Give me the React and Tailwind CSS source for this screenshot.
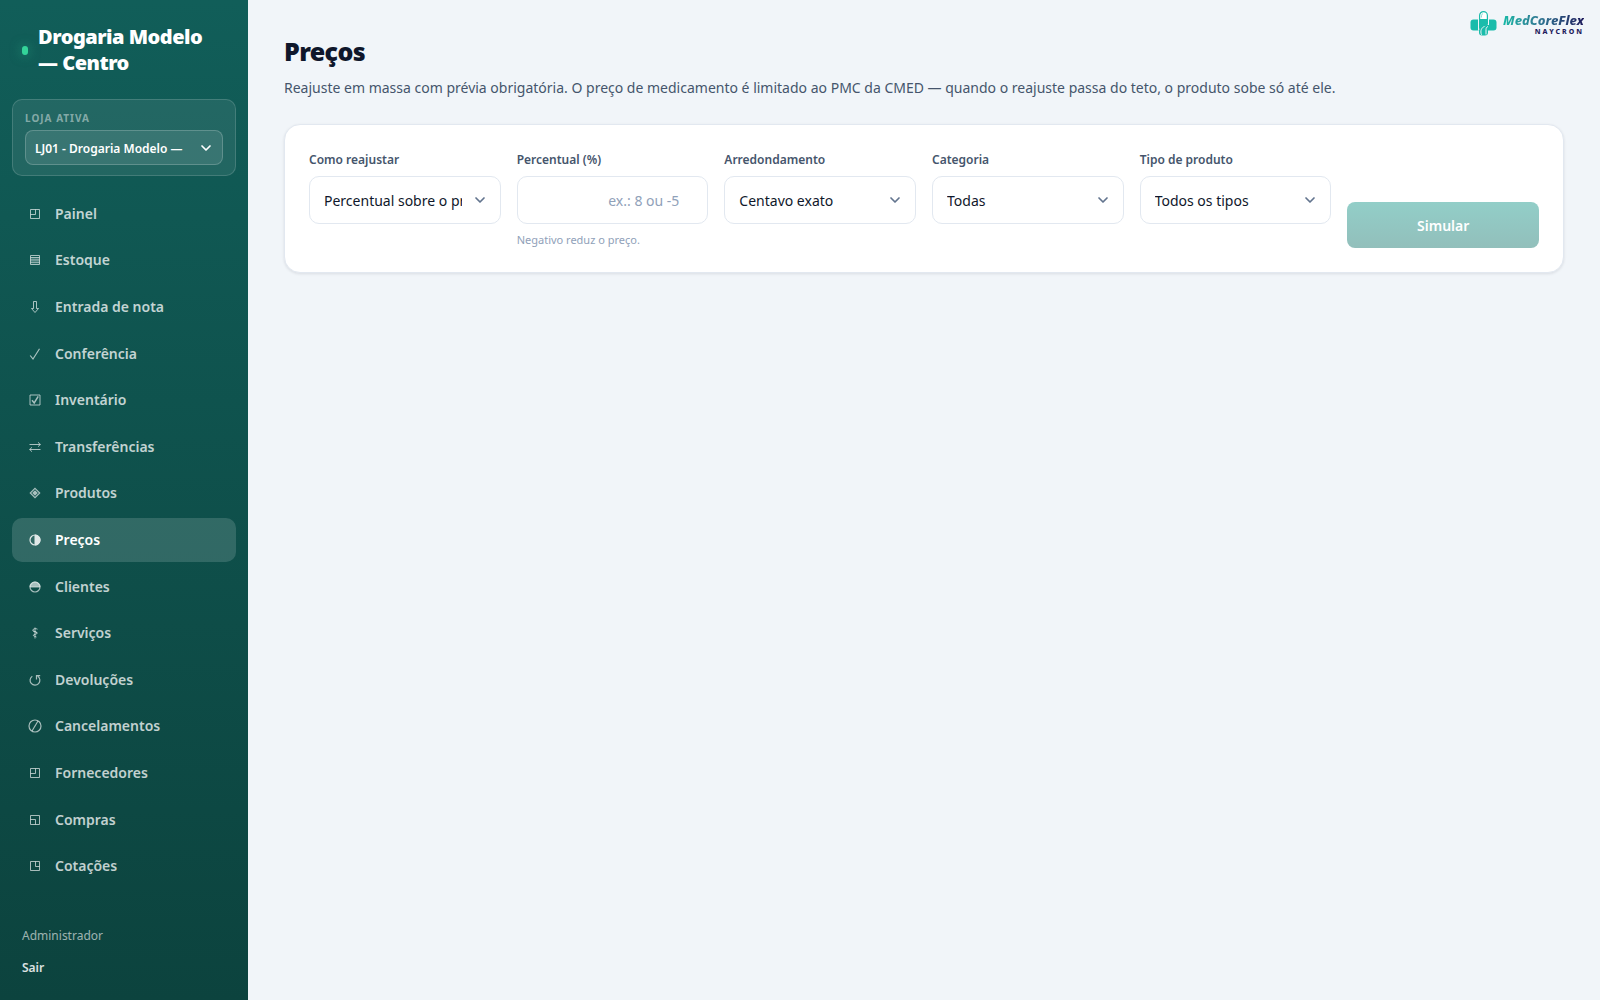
import { useId, useState } from 'react';

const NAV = [
  { label: 'Painel', icon: 'topLeft' },
  { label: 'Estoque', icon: 'lines' },
  { label: 'Entrada de nota', icon: 'arrowDown' },
  { label: 'Conferência', icon: 'check' },
  { label: 'Inventário', icon: 'checkbox' },
  { label: 'Transferências', icon: 'swap' },
  { label: 'Produtos', icon: 'diamond' },
  { label: 'Preços', icon: 'halfRight' },
  { label: 'Clientes', icon: 'halfTop' },
  { label: 'Serviços', icon: 'staff' },
  { label: 'Devoluções', icon: 'undo' },
  { label: 'Cancelamentos', icon: 'slash' },
  { label: 'Fornecedores', icon: 'topLeft' },
  { label: 'Compras', icon: 'bottomLeft' },
  { label: 'Cotações', icon: 'topRight' },
];

const ICONS = {
  topLeft: <path d="M2.5 2.5h9v9h-9zM7.5 2.5v5h-5" />,
  bottomLeft: <path d="M2.5 2.5h9v9h-9zM7.5 11.5v-5h-5" />,
  topRight: <path d="M2.5 2.5h9v9h-9zM7.5 2.5v5h4" />,
  lines: <path d="M2.5 2.5h9v9h-9zM2.5 4.5h9M2.5 6.2h9M2.5 7.9h9M2.5 9.7h9" />,
  arrowDown: <path d="M5.5 1.5h3v7h2L7 12.5 3.5 8.5h2z" />,
  check: <path d="M2.2 8.5 5 12 11.5 1.8" strokeWidth="1.2" />,
  checkbox: (
    <>
      <path d="M2 2h10v10H2z" />
      <path d="M4 7.2 6.2 10 10.2 3.3" strokeWidth="1.5" />
    </>
  ),
  swap: <path d="M1.500 4.500h11M10 2.300 12.300 4.500 10 6.700M12.500 9.500h-11M4 7.300 1.700 9.500 4 11.700" />,
  diamond: (
    <>
      <path d="M7 2.300 11.700 7 7 11.700 2.300 7z" strokeWidth="1.2" />
      <path d="M7 4.200 9.800 7 7 9.800 4.200 7z" fill="currentColor" stroke="none" />
    </>
  ),
  halfRight: (
    <>
      <circle cx="7" cy="7" r="5" strokeWidth="1.2" />
      <path d="M7 2a5 5 0 0 1 0 10z" fill="currentColor" />
    </>
  ),
  halfTop: (
    <>
      <circle cx="7" cy="7" r="5" strokeWidth="1.2" />
      <path d="M2 7a5 5 0 0 1 10 0z" fill="currentColor" />
    </>
  ),
  staff: (
    <path d="M7 1.5v11M9.5 3.2C8 2.2 4.8 2.6 4.8 4.2S9.2 5.2 9.2 7 5.3 7.8 5.3 9.2s2.7 1 3.2 1.8M4.8 4.8C5.5 6 9 5.7 9 7.2" />
  ),
  undo: <path d="M4.300 3.200A4.900 4.900 0 1 0 9.800 3.300M8.500 6.500V2.600h3.700" strokeWidth="1.2" />,
  slash: (
    <>
      <circle cx="7" cy="7" r="6" strokeWidth="1.2" />
      <path d="M10 2 4 12" strokeWidth="1.2" />
    </>
  ),
};

function NavIcon({ name }) {
  return (
    <svg
      viewBox="0 0 14 14"
      className="h-3.5 w-3.5"
      fill="none"
      stroke="currentColor"
      strokeWidth="1"
      aria-hidden="true"
    >
      {ICONS[name]}
    </svg>
  );
}

function Chevron({ className }) {
  return (
    <svg
      viewBox="0 0 12 12"
      className={`pointer-events-none absolute top-1/2 h-3 w-3 -translate-y-1/2 ${className}`}
      fill="none"
      stroke="currentColor"
      strokeWidth="1.7"
      strokeLinecap="round"
      strokeLinejoin="round"
      aria-hidden="true"
    >
      <path d="M2 4l4 4 4-4" />
    </svg>
  );
}

function Logo() {
  return (
    <div className="absolute top-2.5 right-4 flex items-center gap-1.5">
      <svg viewBox="0 0 28 26" className="h-[26px] w-7" aria-hidden="true">
        {/* cross */}
        <rect x="1.5" y="9.500" width="26" height="11" rx="3" fill="#1abcab" />
        <rect x="10" y="12" width="9" height="13.500" rx="3" fill="#1abcab" />
        {/* capsule */}
        <path d="M9 21V6.500a5.500 5.500 0 0 1 11 0V15H17l-5 3z" fill="#f1f5f9" />
        <rect x="10.600" y="1.600" width="7.800" height="15" rx="3.900" fill="#fff" stroke="#1abcab" strokeWidth="1.200" />
        <path d="M10 9h9v4c0 2-2 3-4 3.500-2 .8-3.300 2-4 4-.7-1-1-2-1-3z" fill="#1abcab" />
        <path d="M12.500 7.500V5.700a2 2 0 0 1 1.500-2" fill="none" stroke="#8ddfd5" strokeWidth="1" />
        <path d="M12.500 24.800c-1.500-4 0-7.300 3-8.300M17 24.500v-5c0-1.500.7-2.500 2-3" fill="none" stroke="#f1f5f9" strokeWidth="1" />
      </svg>
      <div className="flex flex-col items-end">
        <span className="bg-linear-to-r from-[#14b8a6] via-[#2f6f8f] to-[#1e1b5c] bg-clip-text text-[13px] leading-4 font-extrabold text-transparent italic">
          MedCoreFlex
        </span>
        <span className="text-[7px] leading-[7px] font-extrabold tracking-[2px] text-[#1e1b5c]">NAYCRON</span>
      </div>
    </div>
  );
}

function Field({ label, hint, children }) {
  const id = useId();
  return (
    <div>
      <label htmlFor={id} className="block text-xs leading-[22px] font-semibold text-slate-600">
        {label}
      </label>
      <div className="relative mt-[5px]">{children(id)}</div>
      {hint && <p className="mt-2 text-[11px] leading-4 text-slate-400">{hint}</p>}
    </div>
  );
}

function SelectField({ label, options }) {
  return (
    <Field label={label}>
      {(id) => (
        <>
          <select
            id={id}
            className="h-12 w-full appearance-none rounded-[10px] border border-slate-200 bg-white pt-0.5 pr-[38px] pl-3.5 text-sm text-slate-900"
          >
            {options.map((o) => (
              <option key={o}>{o}</option>
            ))}
          </select>
          <Chevron className="right-[15px] text-slate-500" />
        </>
      )}
    </Field>
  );
}

function Sidebar() {
  return (
    <aside className="flex w-[248px] shrink-0 flex-col overflow-hidden bg-linear-to-b from-[#115e59] to-[#0c433e] px-3">
      <div className="flex items-center gap-2.5 pt-6 pr-6 pl-2.5">
        <span className="h-[9px] w-1.5 shrink-0 rounded-full bg-[#34d399] shadow-[0_0_12px_rgba(52,211,153,0.5)]" />
        <p className="text-xl leading-[26px] font-black tracking-tight text-white">Drogaria Modelo — Centro</p>
      </div>

      <div className="mt-[23px] rounded-[10px] border border-white/15 bg-white/8 px-3 py-2.5">
        <label htmlFor="loja" className="block text-[10px] leading-4 font-bold tracking-[1px] text-white/45">
          LOJA ATIVA
        </label>
        <div className="relative mt-1">
          <select
            id="loja"
            className="h-[35px] w-full appearance-none rounded-lg border border-white/20 bg-white/10 pt-0.5 pr-[38px] pl-[9px] text-xs font-semibold text-white"
          >
            <option>LJ01 - Drogaria Modelo — Centro</option>
          </select>
          <Chevron className="right-[11px] text-white" />
        </div>
      </div>

      <nav className="mt-4 flex flex-1 flex-col gap-[3px]">
        {NAV.map((item) => {
          const active = item.label === 'Preços';
          return (
            <a
              key={item.label}
              href="#"
              aria-current={active ? 'page' : undefined}
              className={`flex max-h-12 min-h-10 flex-1 items-center gap-2.5 rounded-[10px] pl-[13px] text-sm font-semibold ${
                active ? 'bg-white/15 text-white' : 'text-white/75'
              }`}
            >
              <span className="flex w-5 justify-center opacity-85">
                <NavIcon name={item.icon} />
              </span>
              {item.label}
            </a>
          );
        })}
      </nav>

      <div className="flex flex-col items-start gap-3 px-2.5 pt-[38px] pb-[22px]">
        <span className="text-xs leading-5 text-white/60">Administrador</span>
        <button type="button" className="text-xs leading-5 font-semibold text-white/85">
          Sair
        </button>
      </div>
    </aside>
  );
}

export default function App() {
  const [percent, setPercent] = useState('');

  return (
    <div className="flex min-h-screen bg-slate-100 font-['Noto_Sans','Open_Sans',sans-serif] text-slate-900">
      <Sidebar />

      <main className="relative min-w-0 flex-1 px-9 pt-8">
        <Logo />

        <h1 className="text-[25px] leading-[38px] font-black tracking-tight">Preços</h1>
        <p className="mt-1.5 text-sm leading-6 text-slate-600">
          Reajuste em massa com prévia obrigatória. O preço de medicamento é limitado ao PMC da CMED — quando o
          reajuste passa do teto, o produto sobe só até ele.
        </p>

        <form
          className="mt-6 grid grid-cols-6 gap-4 rounded-2xl border border-slate-200 bg-white p-6 shadow-[0_1px_3px_rgba(15,23,42,0.1)]"
          onSubmit={(e) => e.preventDefault()}
        >
          <SelectField label="Como reajustar" options={['Percentual sobre o preço atual', 'Margem sobre o custo']} />
          <Field label="Percentual (%)" hint="Negativo reduz o preço.">
            {(id) => (
              <input
                id={id}
                inputMode="decimal"
                value={percent}
                onChange={(e) => setPercent(e.target.value)}
                placeholder="ex.: 8 ou -5"
                className="h-12 w-full rounded-[10px] border border-slate-200 bg-white pr-7 pl-3.5 text-right text-sm placeholder:text-slate-400"
              />
            )}
          </Field>
          <SelectField label="Arredondamento" options={['Centavo exato', 'Final ,90', 'Final ,99']} />
          <SelectField label="Categoria" options={['Todas']} />
          <SelectField label="Tipo de produto" options={['Todos os tipos']} />
          <button
            type="submit"
            disabled={!percent}
            className="h-[46px] self-end rounded-lg bg-linear-to-b from-teal-600 to-teal-700 pt-0.5 text-sm font-semibold text-white disabled:from-[#92cec8] disabled:to-[#92bfbb]"
          >
            Simular
          </button>
        </form>
      </main>
    </div>
  );
}
